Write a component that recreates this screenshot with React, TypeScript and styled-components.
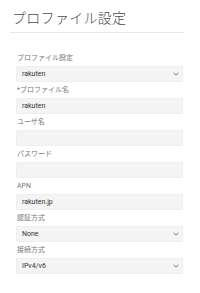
import styled, { createGlobalStyle } from "styled-components";

const GlobalStyle = createGlobalStyle`
    html, body {
        margin: 0;
        padding: 0;
        background: #ffffff;
    }
    body {
        font-family: "Roboto", "Noto Sans CJK JP", sans-serif;
    }
`;

type Field = {
    label: string;
    value: string;
    select?: boolean;
};

const fields: Field[] = [
    { label: "プロファイル設定", value: "rakuten", select: true },
    { label: "*プロファイル名", value: "rakuten" },
    { label: "ユーザ名", value: "" },
    { label: "パスワード", value: "" },
    { label: "APN", value: "rakuten.jp" },
    { label: "認証方式", value: "None", select: true },
    { label: "接続方式", value: "IPv4/v6", select: true },
];

function Chevron() {
    return (
        <svg width="6" height="4" viewBox="0 0 6 4">
            <polyline
                points="0.6,0.8 3,3.1 5.4,0.8"
                fill="none"
                stroke="#777777"
                strokeWidth="1"
            />
        </svg>
    );
}

function App() {
    return (
        <Wrapper>
            <GlobalStyle />
            <Header>
                <Title>プロファイル設定</Title>
            </Header>
            <Form>
                {fields.map((f) => (
                    <Row key={f.label}>
                        <Label>{f.label}</Label>
                        <Box>
                            <Value>{f.value}</Value>
                            {f.select && <Chevron />}
                        </Box>
                    </Row>
                ))}
            </Form>
        </Wrapper>
    );
}

const Wrapper = styled.div`
    width: 200px;
    height: 293px;
    background: #ffffff;
    overflow: hidden;
`;
const Header = styled.div`
    margin: 0 16px 0 10px;
    padding: 7px 0 5px 2px;
    border-bottom: 1px solid #e8e8e8;
`;
const Title = styled.h1`
    margin: 0;
    font-family: "Noto Sans CJK JP", sans-serif;
    font-size: 14px;
    font-weight: 300;
    line-height: 20px;
    letter-spacing: 0.3px;
    color: #4a4a4a;
`;
const Form = styled.div`
    padding: 17px 17px 0 16px;
`;
const Row = styled.div`
    display: flex;
    flex-direction: column;
`;
const Label = styled.div`
    height: 16px;
    padding-left: 1px;
    font-size: 7px;
    line-height: 16px;
    color: #777777;
    white-space: nowrap;
`;
const Box = styled.div`
    height: 16px;
    box-sizing: border-box;
    display: flex;
    align-items: center;
    justify-content: space-between;
    padding: 0 3px 0 5px;
    background: #f4f4f4;
    border: 1px solid #eeeeee;
    border-radius: 1px;
`;
const Value = styled.span`
    font-size: 7px;
    color: #333333;
`;

export default App;
